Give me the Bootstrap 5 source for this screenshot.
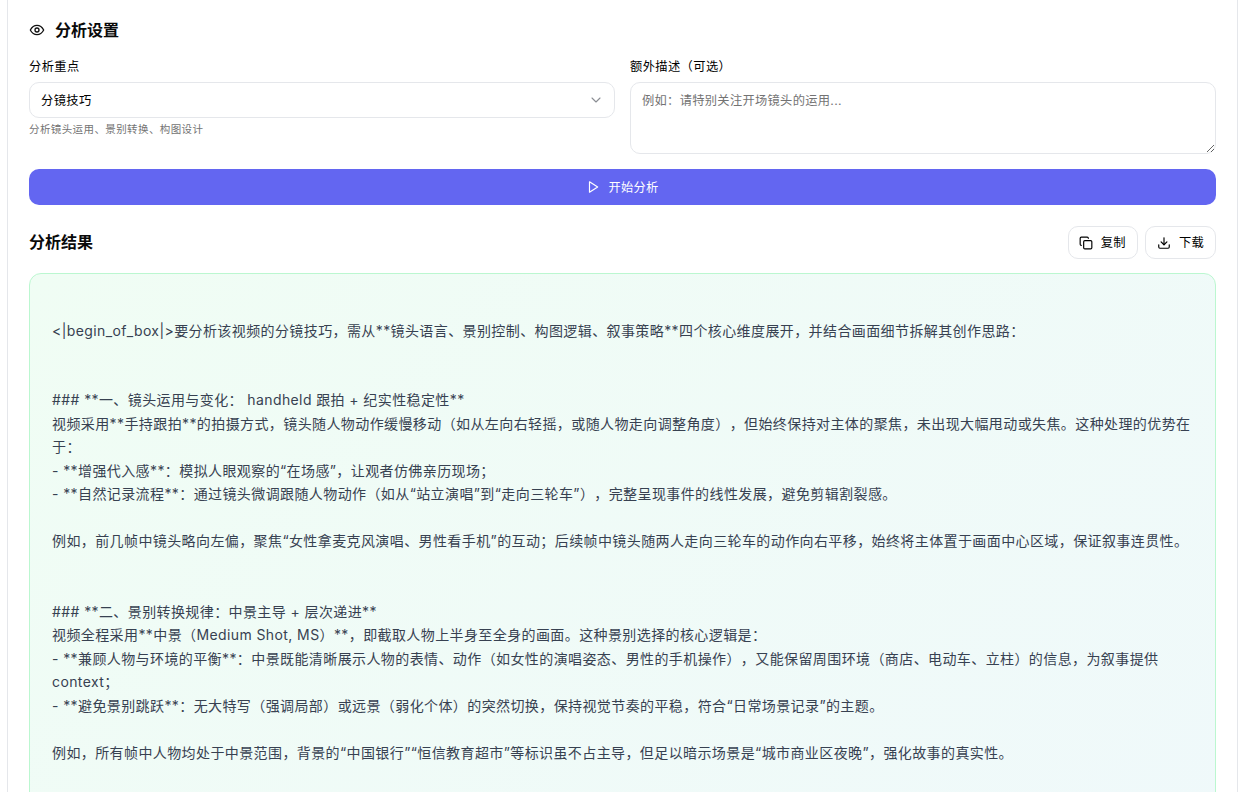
<!DOCTYPE html>
<html lang="zh-CN">
<head>
    <meta charset="UTF-8">
    <title>分析设置</title>
    <link rel="stylesheet" href="https://cdn.jsdelivr.net/npm/bootstrap@5.3.0/dist/css/bootstrap.min.css">
    <style>
        html, body { height: 792px; overflow: hidden; }
        body { background: #fff; font-family: Inter, "Noto Sans CJK SC", sans-serif; color: #111; letter-spacing: .025em; text-spacing-trim: space-all; }
        .page-shell { margin-left: 7px; width: 1231px; height: 792px; border-left: 1px solid #e5e7eb; border-right: 1px solid #e5e7eb; padding: 18px 21px 0; overflow: hidden; }
        .sect-title { font-size: 16px; font-weight: 700; line-height: 24px; margin: 0; color: #0a0a0a; letter-spacing: 0; }
        .head-row { gap: 10px; height: 24px; margin-bottom: 18px; }
        .head-row svg { width: 16px; height: 16px; }
        .field-label { font-size: 12.25px; font-weight: 400; line-height: 14px; margin-bottom: 8px; display: block; color: #000; }
        .pick-box { height: 36px; border: 1px solid #e5e7eb; border-radius: 10px; padding: 2px 11px 0; font-size: 12.25px; color: #000; }
        .pick-box svg { width: 16px; height: 16px; margin-right: -1px; margin-top: -2px; color: #8a8d93; stroke-width: 1.6; }
        .hint-text { font-size: 10.5px; line-height: 14px; color: #737373; margin-top: 5px; }
        .desc-box { height: 72px; border: 1px solid #e5e7eb; border-radius: 10px; padding: 8px 11px; font-size: 12.25px; line-height: 20px; resize: vertical; box-shadow: none; width: 100%; display: block; outline: 0; letter-spacing: .025em; }
        .desc-box::placeholder { color: #737373; opacity: 1; }
        .field-cols { display: grid; grid-template-columns: 586px 586px; gap: 15px; margin-bottom: 15px; }
        .go-btn { height: 36px; width: 100%; background: #6366f1; border: 0; border-radius: 10px; color: #fff; font-size: 12.25px; gap: 8px; letter-spacing: .025em; }
        .go-btn span { padding-top: 2px; }
        .go-btn svg { width: 14px; height: 14px; }
        .result-head { height: 33px; margin-top: 21px; margin-bottom: 14px; }
        .result-head .sect-title { padding-bottom: 2px; }
        .tool-btns { gap: 7px; }
        .tool-btn { height: 33px; background: #fff; border: 1px solid #e5e7eb; border-radius: 10px; font-size: 12.25px; color: #000; gap: 8px; padding: 0 11px; letter-spacing: .025em; }
        .tool-btn:first-child { padding-left: 10px; }
        .tool-btn span { padding-top: 2px; }
        .tool-btn svg { width: 14px; height: 14px; }
        .result-box { border: 1px solid #bbf7d0; border-radius: 12px; background: linear-gradient(135deg, #f0fdf4, #eff6ff); padding: 45px 22px 40px; min-height: 1800px; font-size: 14px; line-height: 23.53px; color: #374151; }
        .result-box p { margin: 0; }
        .lead-line { margin-bottom: 45.5px !important; }
    </style>
</head>
<body>

<div class="page-shell">
    <div class="d-flex align-items-center head-row">
        <svg viewBox="0 0 24 24" fill="none" stroke="currentColor" stroke-width="2" stroke-linecap="round" stroke-linejoin="round"><path d="M2 12s3.6-7 10-7 10 7 10 7-3.6 7-10 7-10-7-10-7z"/><circle cx="12" cy="12" r="3"/></svg>
        <h3 class="sect-title">分析设置</h3>
    </div>

    <div class="field-cols">
        <div>
            <label class="field-label">分析重点</label>
            <div class="pick-box d-flex align-items-center justify-content-between">
                <span>分镜技巧</span>
                <svg viewBox="0 0 24 24" fill="none" stroke="currentColor" stroke-width="2" stroke-linecap="round" stroke-linejoin="round"><path d="m6 9 6 6 6-6"/></svg>
            </div>
            <div class="hint-text">分析镜头运用、景别转换、构图设计</div>
        </div>
        <div>
            <label class="field-label">额外描述（可选）</label>
            <textarea class="desc-box" placeholder="例如：请特别关注开场镜头的运用..."></textarea>
        </div>
    </div>

    <button type="button" class="btn go-btn d-flex align-items-center justify-content-center">
        <svg viewBox="0 0 24 24" fill="none" stroke="currentColor" stroke-width="2" stroke-linecap="round" stroke-linejoin="round"><path d="M6 3l14 9-14 9V3z"/></svg>
        <span>开始分析</span>
    </button>

    <div class="d-flex align-items-center justify-content-between result-head">
        <h3 class="sect-title">分析结果</h3>
        <div class="d-flex tool-btns">
            <button type="button" class="btn tool-btn d-flex align-items-center">
                <svg viewBox="0 0 24 24" fill="none" stroke="currentColor" stroke-width="2" stroke-linecap="round" stroke-linejoin="round"><rect x="8" y="8" width="14" height="14" rx="2"/><path d="M4 16c-1.1 0-2-.9-2-2V4c0-1.1.9-2 2-2h10c1.1 0 2 .9 2 2"/></svg>
                <span>复制</span>
            </button>
            <button type="button" class="btn tool-btn d-flex align-items-center">
                <svg viewBox="0 0 24 24" fill="none" stroke="currentColor" stroke-width="2" stroke-linecap="round" stroke-linejoin="round"><path d="M21 15v4a2 2 0 0 1-2 2H5a2 2 0 0 1-2-2v-4"/><path d="m7 10 5 5 5-5"/><path d="M12 15V3"/></svg>
                <span>下载</span>
            </button>
        </div>
    </div>

    <div class="result-box">
        <p class="lead-line">&lt;|begin_of_box|&gt;要分析该视频的分镜技巧，需从**镜头语言、景别控制、构图逻辑、叙事策略**四个核心维度展开，并结合画面细节拆解其创作思路：</p>
        <p>### **一、镜头运用与变化： handheld 跟拍 + 纪实性稳定性**</p>
        <p>视频采用**手持跟拍**的拍摄方式，镜头随人物动作缓慢移动（如从左向右轻摇，或随人物走向调整角度），但始终保持对主体的聚焦，未出现大幅甩动或失焦。这种处理的优势在于：</p>
        <p>- **增强代入感**：模拟人眼观察的“在场感”，让观者仿佛亲历现场；</p>
        <p>- **自然记录流程**：通过镜头微调跟随人物动作（如从“站立演唱”到“走向三轮车”），完整呈现事件的线性发展，避免剪辑割裂感。</p>
        <p>&nbsp;</p>
        <p>例如，前几帧中镜头略向左偏，聚焦“女性拿麦克风演唱、男性看手机”的互动；后续帧中镜头随两人走向三轮车的动作向右平移，始终将主体置于画面中心区域，保证叙事连贯性。</p>
        <p>&nbsp;</p>
        <p>&nbsp;</p>
        <p>### **二、景别转换规律：中景主导 + 层次递进**</p>
        <p>视频全程采用**中景（Medium Shot, MS）**，即截取人物上半身至全身的画面。这种景别选择的核心逻辑是：</p>
        <p>- **兼顾人物与环境的平衡**：中景既能清晰展示人物的表情、动作（如女性的演唱姿态、男性的手机操作），又能保留周围环境（商店、电动车、立柱）的信息，为叙事提供context；</p>
        <p>- **避免景别跳跃**：无大特写（强调局部）或远景（弱化个体）的突然切换，保持视觉节奏的平稳，符合“日常场景记录”的主题。</p>
        <p>&nbsp;</p>
        <p>例如，所有帧中人物均处于中景范围，背景的“中国银行”“恒信教育超市”等标识虽不占主导，但足以暗示场景是“城市商业区夜晚”，强化故事的真实性。</p>
    </div>
</div>

</body>
</html>
